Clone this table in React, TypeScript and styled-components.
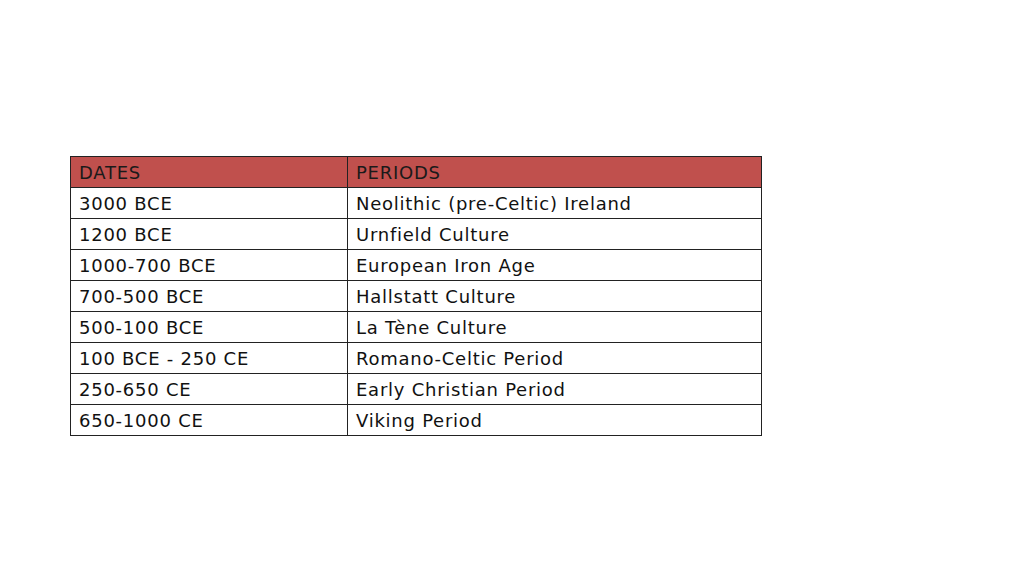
import React from "react";
import styled, { createGlobalStyle } from "styled-components";

const Global = createGlobalStyle`
  html, body { margin: 0; padding: 0; background: #ffffff; }
  body { width: 1024px; height: 576px; overflow: hidden; }
`;

const Page = styled.div`
  width: 1024px;
  height: 576px;
  box-sizing: border-box;
  padding: 156px 0 0 70px;
  font-family: "DejaVu Sans", Verdana, sans-serif;
`;

const Table = styled.table`
  border-collapse: collapse;
  width: 692px;
  table-layout: fixed;
`;

const HeadCell = styled.th<{ $w?: number }>`
  background: #c0504d;
  color: #1a1a1a;
  font-weight: normal;
  text-align: left;
  font-size: 18px;
  letter-spacing: 0.75px;
  height: 31px;
  padding: 0 7px 0 8px;
  box-sizing: border-box;
  border: 1px solid #222;
  width: ${(p) => (p.$w ? `${p.$w}px` : "auto")};
`;

const Cell = styled.td`
  color: #111;
  font-size: 18px;
  letter-spacing: 0.75px;
  height: 31px;
  padding: 0 7px 0 8px;
  box-sizing: border-box;
  border: 1px solid #222;
  white-space: nowrap;
`;

const rows: [string, string][] = [
  ["3000 BCE", "Neolithic (pre-Celtic) Ireland"],
  ["1200 BCE", "Urnfield Culture"],
  ["1000-700 BCE", "European Iron Age"],
  ["700-500 BCE", "Hallstatt Culture"],
  ["500-100 BCE", "La Tène Culture"],
  ["100 BCE - 250 CE", "Romano-Celtic Period"],
  ["250-650 CE", "Early Christian Period"],
  ["650-1000 CE", "Viking Period"],
];

export default function App() {
  return (
    <>
      <Global />
      <Page>
        <Table>
          <thead>
            <tr>
              <HeadCell $w={277}>DATES</HeadCell>
              <HeadCell>PERIODS</HeadCell>
            </tr>
          </thead>
          <tbody>
            {rows.map(([d, p]) => (
              <tr key={d}>
                <Cell>{d}</Cell>
                <Cell>{p}</Cell>
              </tr>
            ))}
          </tbody>
        </Table>
      </Page>
    </>
  );
}
